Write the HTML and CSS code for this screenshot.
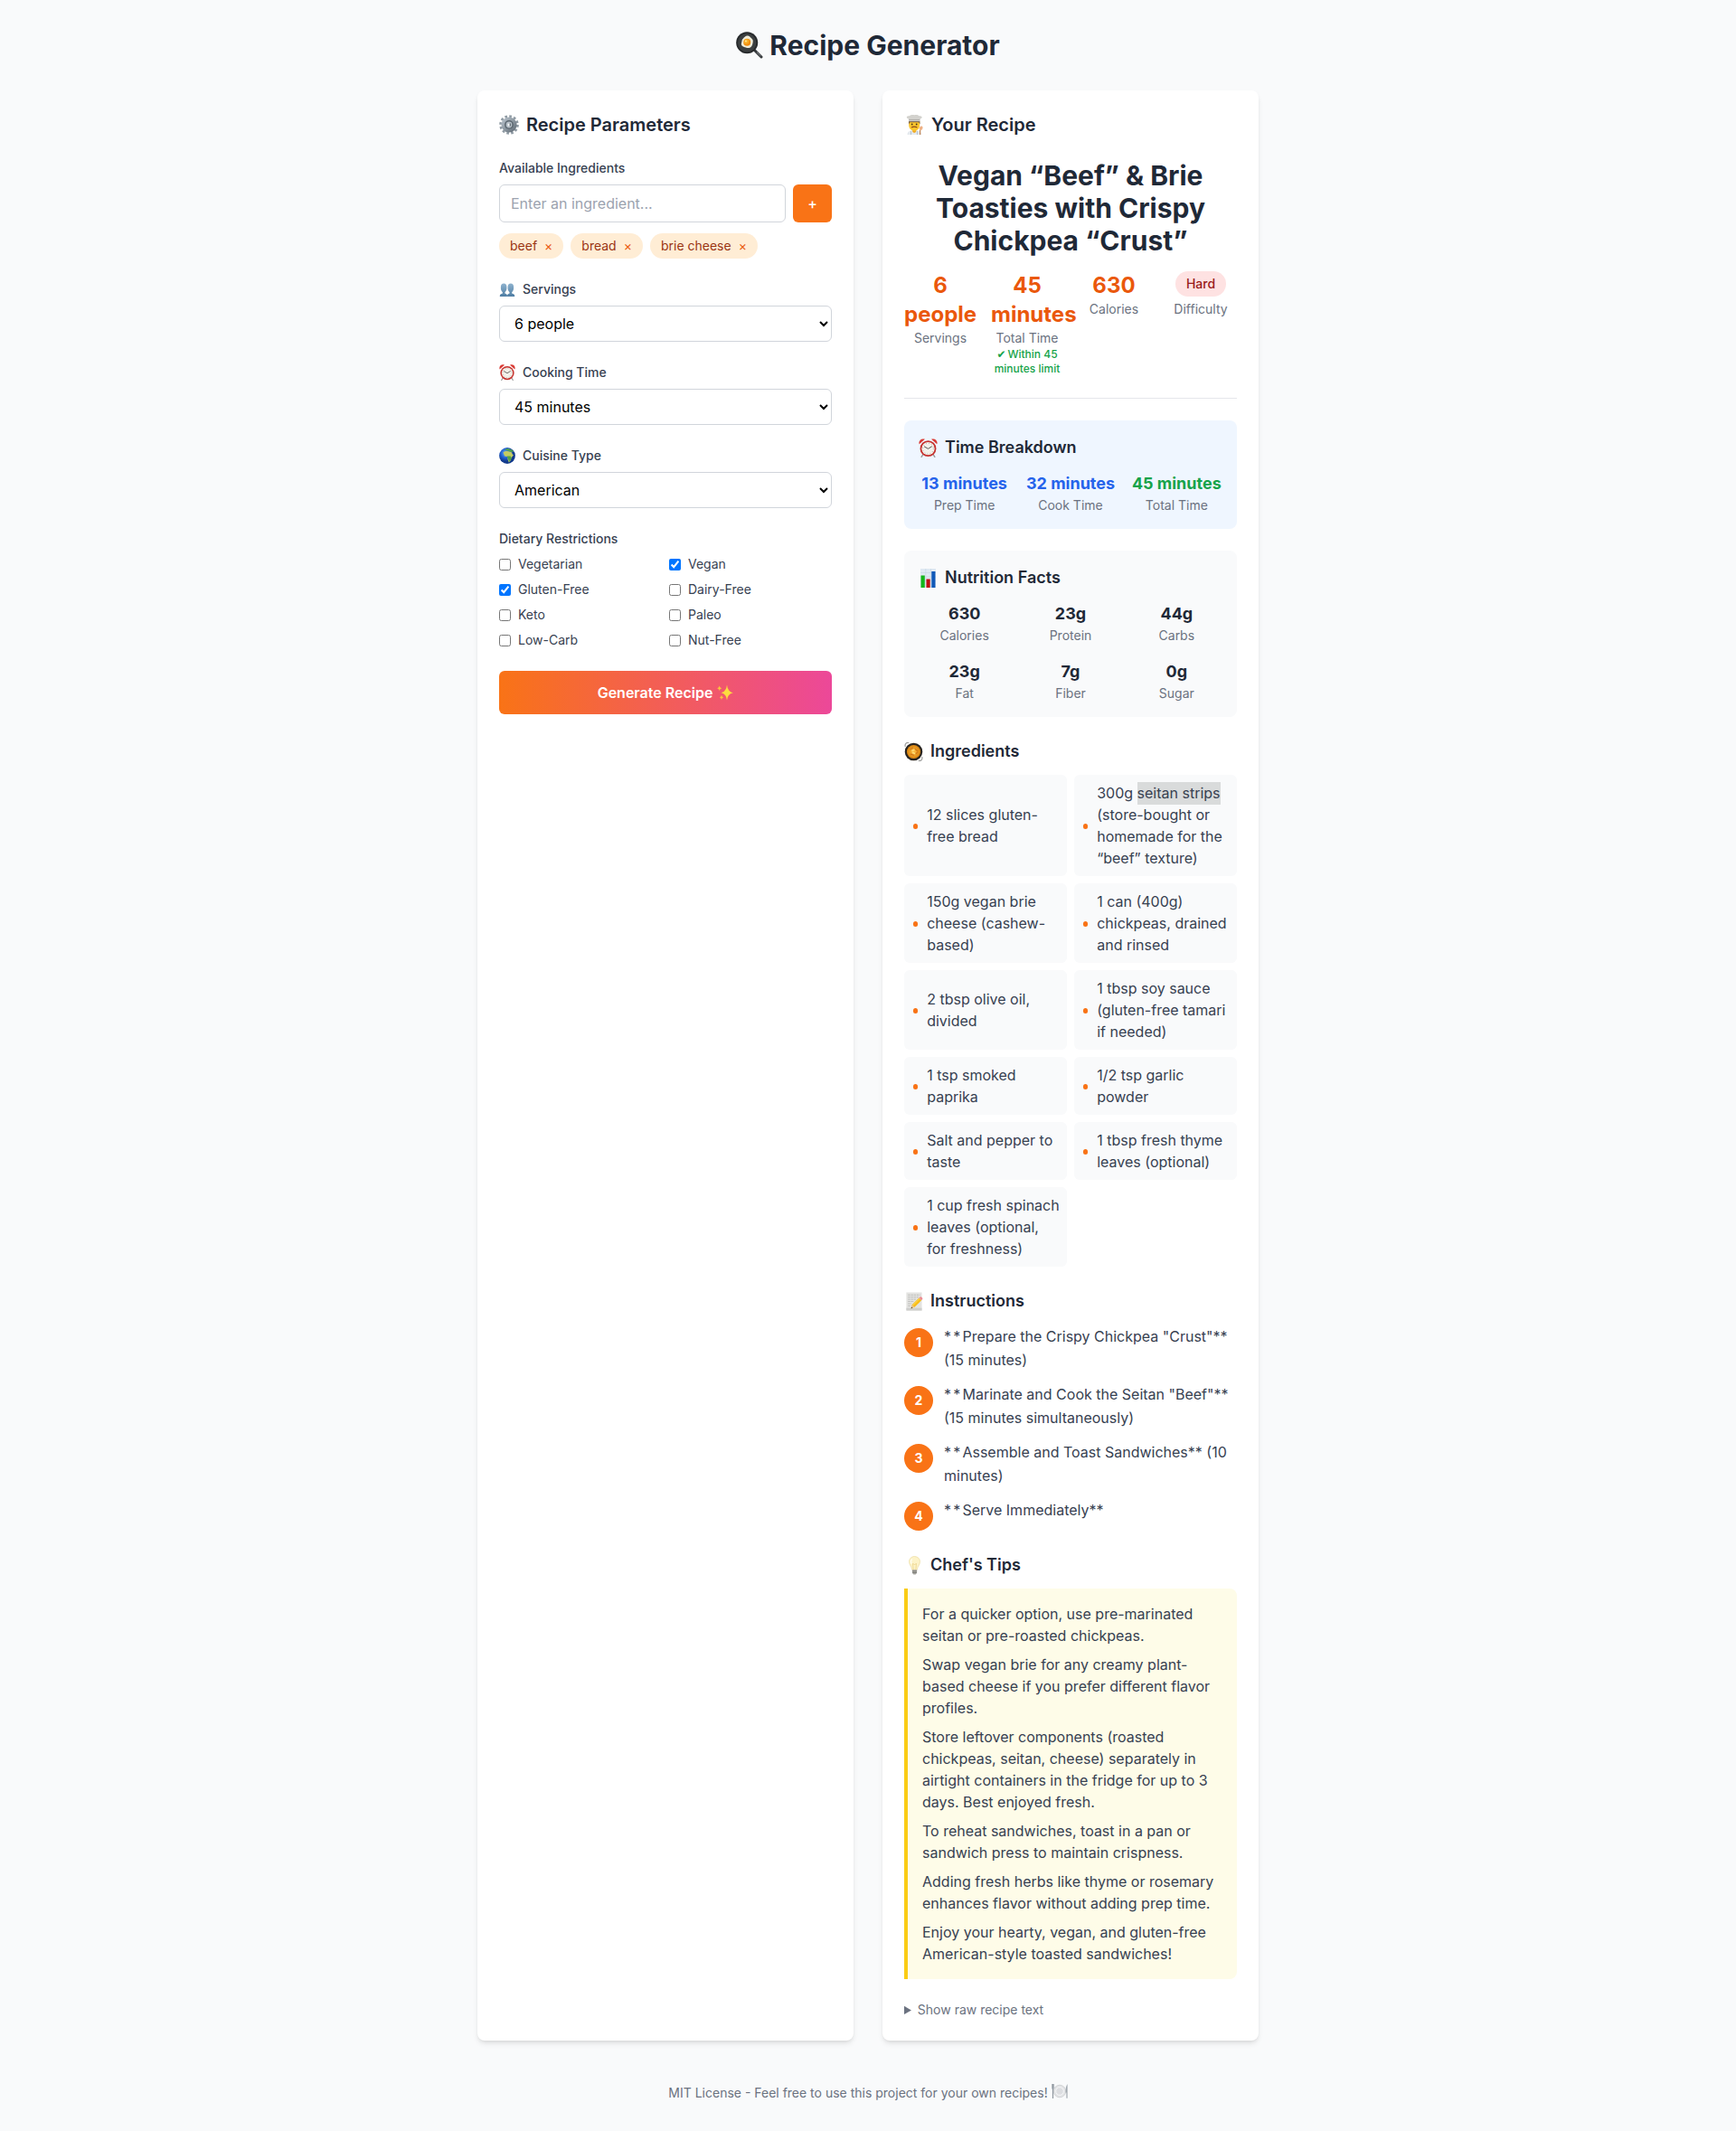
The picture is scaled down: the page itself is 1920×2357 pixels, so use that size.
FILE: index.html
```html
<!DOCTYPE html>
<html lang="en">
<head>
<meta charset="utf-8">
<title>Recipe Generator</title>
<link rel="stylesheet" href="styles.css">
</head>
<body>
<svg class="sprite" aria-hidden="true">
  <defs>
    <radialGradient id="globe-sea" cx=".4" cy=".35"><stop offset="0" stop-color="#6fb4ff"/><stop offset=".6" stop-color="#1f5fd0"/><stop offset="1" stop-color="#123a8c"/></radialGradient>
    <linearGradient id="bust-fill" x1="0" y1="0" x2="0" y2="1"><stop offset="0" stop-color="#8fb3cf"/><stop offset="1" stop-color="#4e7da3"/></linearGradient>
    <linearGradient id="gear-fill" x1="0" y1="0" x2="1" y2="1"><stop offset="0" stop-color="#b4bec7"/><stop offset="1" stop-color="#66717b"/></linearGradient>
    <radialGradient id="stew-fill"><stop offset="0" stop-color="#ffc247"/><stop offset="1" stop-color="#d9820d"/></radialGradient>
    <radialGradient id="yolk-fill" cx=".4" cy=".35"><stop offset="0" stop-color="#ffc93c"/><stop offset="1" stop-color="#f08b0c"/></radialGradient>
  </defs>
  <symbol id="pan" viewBox="0 0 30 30">
    <path d="M20.5 20.5 28 28" stroke="#33373a" stroke-width="3" stroke-linecap="round"/>
    <path d="M23 22.6 27.5 27" stroke="#8c9093" stroke-width="1"/>
    <circle cx="12.2" cy="12.3" r="12" fill="#26292b"/>
    <circle cx="12.2" cy="12.3" r="10.3" fill="#3c3f40"/>
    <path d="M12 4.600c2.600-.6 3.500 1.400 5.300 2.900s1.700 3 1.200 5.200-1.200 4.800-3.800 5.200-4.200-.5-6.300-1.200-3.100-2.300-2.300-4.500 0-3.100 1.700-4.500 2.300-2.800 4.200-3.100z" fill="#efecd9"/>
    <circle cx="12.200" cy="11.800" r="4" fill="url(#yolk-fill)"/>
    <circle cx="10.900" cy="10.400" r=".9" fill="#ffe9a0"/>
  </symbol>
  <symbol id="gear" viewBox="0 0 22 22">
    <circle cx="11" cy="11" r="9.300" fill="none" stroke="#8f9aa3" stroke-width="3" stroke-dasharray="2.600 2.270"/>
    <circle cx="11" cy="11" r="6.600" fill="none" stroke="url(#gear-fill)" stroke-width="4"/>
    <circle cx="11" cy="11" r="5" fill="#59646d"/>
    <circle cx="11" cy="11" r="3.400" fill="#b5bec6"/>
    <circle cx="11" cy="11" r="1.500" fill="#f8fafb"/>
    <path d="M12.200 9.500v3" stroke="#39434b" stroke-width="1"/>
  </symbol>
  <symbol id="chef" viewBox="0 0 20 22">
    <path d="M1.500 22c0-3.500 2.500-5 7.500-5s8 1.500 8 5z" fill="#e4e9ee"/>
    <path d="M5.500 18v4M12.500 18v4" stroke="#a9b9c8" stroke-width=".8"/>
    <path d="M7.200 16h4v3l-2 1-2-1z" fill="#f0ab25"/>
    <path d="M3.200 7h12v4.500c0 3.800-2.800 6.200-6 6.200s-6-2.400-6-6.200z" fill="#fcc62d"/>
    <path d="M3.100 6.500h12.200l.2 4-1.300-2.300H4.300l-1.200 2.300z" fill="#6c5138"/>
    <circle cx="6.700" cy="10.500" r=".9" fill="#49351d"/><circle cx="11.700" cy="10.500" r=".9" fill="#49351d"/>
    <path d="M6 14.100q3.200-1.800 6.400 0" stroke="#8c4a18" stroke-width="1.200" fill="none"/>
    <path d="M3.200 7.200 2.700 4.300C-.2 3.500.4 1 3.500 1.300 5 .1 7.500-.2 9.300.2c2-.4 4.200-.2 5.300 1.100 3.500-.1 4.200 2.100 1.300 3.100l-.6 2.800z" fill="#d3d2ce"/>
    <path d="M3.200 5.600h12" stroke="#a6a5a1" stroke-width=".8"/>
    <path d="M15.600 22v-5.500" stroke="#c58d63" stroke-width="1.400"/>
    <ellipse cx="16.700" cy="14.700" rx="1.800" ry="2.300" transform="rotate(20 16.700 14.700)" fill="#eeb185"/>
  </symbol>
  <symbol id="people" viewBox="0 0 18 16">
    <path d="M.2 16c0-2.600 1.200-3 3.300-3.700v-1.400C1.700 9.300 1.400 7.500 1.400 5c0-3 1.300-4.500 3.500-4.500S8.400 2 8.400 5c0 2.500-.3 4.300-2.100 5.900v1.400C8.400 13 9 13.400 9 16z" fill="url(#bust-fill)"/>
    <path d="M9 16c0-2.600.6-3 2.700-3.700v-1.400C9.900 9.300 9.600 7.500 9.600 5c0-3 1.300-4.500 3.500-4.500S16.600 2 16.600 5c0 2.500-.3 4.300-2.100 5.900v1.400c2.100.7 3.300 1.100 3.300 3.700z" fill="url(#bust-fill)"/>
  </symbol>
  <symbol id="clock" viewBox="0 0 20 20">
    <path d="M4.500 17 3 19.500M15.500 17l1.500 2.500" stroke="#999" stroke-width="1.300" stroke-linecap="round"/>
    <path d="M.7 6C-.6 2.500 3-.8 6.600.8z" fill="#d93832"/><path d="M19.300 6C20.600 2.500 17-.8 13.400.8z" fill="#d93832"/>
    <circle cx="10" cy="10.600" r="8.500" fill="#c5322e"/>
    <circle cx="10" cy="10.600" r="6.800" fill="#f4f1ea"/>
    <circle cx="10" cy="10.600" r="5.600" fill="none" stroke="#8e8a83" stroke-width=".8" stroke-dasharray=".7 2.230"/>
    <path d="m5.800 8.400 4.200 2.400 4-2.500" stroke="#4c4b49" stroke-width=".9" fill="none"/>
  </symbol>
  <symbol id="globe" viewBox="0 0 18 18">
    <circle cx="9" cy="9" r="8.900" fill="url(#globe-sea)"/>
    <path d="M4.500 5.500C5.500 4 8 3.500 10 4.200l3.500.6 1.500 3 1 .4-2.300 3-.9 3-2 2.300-1.300-3.600.1-2.700-3.400-.6z" fill="#c4cc62"/>
    <path d="M6 2.600 9.500.9l5 1.900 1.700 2.300-3.700-.7-3-.8z" fill="#4fa24a"/>
    <path d="M8.600 9.500h4l1.100 1.700-1 2.500-1.500 1.800z" fill="#4fa24a"/>
  </symbol>
  <symbol id="sparkles" viewBox="0 0 18 18">
    <path d="M11 .5Q11.600 8 17.800 9.200 11.600 10.400 11 17.500 10.400 10.400 4.600 9.200 10.400 8 11 .5z" fill="#fcdc3f"/>
    <path d="M2.700 1.500q.3 2.300 2.500 2.800Q3 4.800 2.700 7.200 2.400 4.800.2 4.300q2.200-.5 2.500-2.800zM5 11.800q.3 2 2.200 2.500Q5.300 14.800 5 17q-.3-2.200-2.200-2.700Q4.700 13.800 5 11.800z" fill="#fbc43c"/>
  </symbol>
  <symbol id="chart" viewBox="0 0 18 21">
    <path d="M.5 0h17v21H.5z" fill="#dfe9f2"/>
    <path d="M.5 4.500h17M.5 9h17M.5 13.500h17M6.300 0v21M12 0v21" stroke="#c3d3e1" stroke-width=".6"/>
    <path d="M1 7.500h4.300V21H1z" fill="#13b51b"/><path d="M7 11.500h4.200V21H7z" fill="#c10d12"/><path d="M12.800 3H17v18h-4.200z" fill="#1059b8"/>
  </symbol>
  <symbol id="stew" viewBox="0 0 20 20">
    <path d="M5 .8C2.500-.3.200 2 1.300 4.800M15 19.200c2.500 1.100 4.800-1.200 3.700-4" stroke="#9a9a98" stroke-width="1.100" fill="none"/>
    <circle cx="10" cy="10" r="9.300" fill="#292521"/>
    <circle cx="10" cy="10" r="7.200" fill="url(#stew-fill)"/>
    <path d="M6.500 7.500 9 5.800M11.500 7l2.500 2M7 12.500l3 1M12.500 12l1.500-1.500" stroke="#cf7418" stroke-width="1.100" stroke-linecap="round"/>
    <path d="m8.500 9 2-1M9 11l2 .8" stroke="#ffe07c" stroke-width="1.400" stroke-linecap="round"/>
  </symbol>
  <symbol id="memo" viewBox="0 0 20 22">
    <path d="M1.500.5h18v21h-18z" fill="#e3e3e1"/><path d="M1.500 18.500h18v3h-18z" fill="#cfcfcd"/>
    <path d="M3.500 3.500h14M3.500 6h12M3.500 8.500h9M3.500 11h7M3.500 13.500h4M3.500 16h3" stroke="#b1b1af" stroke-width=".8" stroke-dasharray="2.500 .8"/>
    <path d="m7 19 1.200-4.300 8-7.800 2.800 2.900-8 7.800z" fill="#f9bd18"/>
    <path d="m8.700 15.800 8.200-8" stroke="#ffdf62" stroke-width="1"/>
    <path d="m7 19 1.200-4.300 2.800 2.900z" fill="#e9c38e"/><path d="m7 19 .5-1.800 1.200 1.300z" fill="#3c3936"/>
    <path d="m16.200 6.900 1.200-1.100c1.200-1 3.700 1.400 2.700 2.700L19 9.800z" fill="#ed8c93"/>
  </symbol>
  <symbol id="bulb" viewBox="0 0 20 21">
    <path d="M11 .5c3.700 0 6 2.700 6 5.800 0 3.600-2.800 5.200-3.200 9H8.200C7.800 11.500 5 9.900 5 6.300 5 3.200 7.300.5 11 .5z" fill="#fdf3c8" stroke="#ead99b" stroke-width=".6"/>
    <path d="M9.700 15 9 8.500l2 1 2-1-.7 6.500" stroke="#e6c976" stroke-width=".6" fill="none"/>
    <path d="M8.400 3.500C6.800 4.700 6.500 7 7.700 8.500" stroke="#fffdf0" stroke-width="1.500" fill="none"/>
    <path d="M8.400 15.300h5.200v3.400L12.200 20.500H9.800l-1.400-1.800z" fill="#aaa9a3"/><path d="M8.400 16.800h5.200M8.700 18.500h4.700" stroke="#6f6e69" stroke-width=".7"/>
  </symbol>
  <symbol id="plate" viewBox="0 0 18 16">
    <circle cx="9" cy="8" r="6.800" fill="#e2e3e5" stroke="#c7c9cc" stroke-width=".7"/>
    <circle cx="9" cy="8" r="4.300" fill="#dcdde0" stroke="#f8f8f9" stroke-width=".9"/>
    <path d="M1.500 0v16" stroke="#90979f" stroke-width="1.200"/><path d="M.4 0v4.500c0 1.500 2.200 1.500 2.200 0V0" stroke="#929ba3" stroke-width=".7" fill="none"/>
    <path d="M17.600 0v15.700h-1.200V9.500h-.8C15.600 5 16 2 17.600 0z" fill="#a1a8af"/>
  </symbol>
</svg>

<div class="page">
  <header><h1><svg class="icon-title"><use href="#pan"/></svg>Recipe Generator</h1></header>
  <main class="columns">
    <section class="card">
      <h2><svg class="icon-lg"><use href="#gear"/></svg>Recipe Parameters</h2>
      <form class="form">
        <div class="field">
          <label class="label" for="ingredient">Available Ingredients</label>
          <div class="add-row">
            <input class="text-input" id="ingredient" type="text" placeholder="Enter an ingredient...">
            <button class="add-button" type="button">+</button>
          </div>
          <div class="tags">
            <span class="tag">beef<button type="button">×</button></span>
            <span class="tag">bread<button type="button">×</button></span>
            <span class="tag">brie cheese<button type="button">×</button></span>
          </div>
        </div>
        <div class="field">
          <label class="label" for="servings"><svg class="icon-sm people"><use href="#people"/></svg>Servings</label>
          <select id="servings"><option>6 people</option></select>
        </div>
        <div class="field">
          <label class="label" for="time"><svg class="icon-sm"><use href="#clock"/></svg>Cooking Time</label>
          <select id="time"><option>45 minutes</option></select>
        </div>
        <div class="field">
          <label class="label" for="cuisine"><svg class="icon-sm"><use href="#globe"/></svg>Cuisine Type</label>
          <select id="cuisine"><option>American</option></select>
        </div>
        <div class="field">
          <span class="label">Dietary Restrictions</span>
          <div class="checks">
            <label><input type="checkbox">Vegetarian</label>
            <label><input type="checkbox" checked>Vegan</label>
            <label><input type="checkbox" checked>Gluten-Free</label>
            <label><input type="checkbox">Dairy-Free</label>
            <label><input type="checkbox">Keto</label>
            <label><input type="checkbox">Paleo</label>
            <label><input type="checkbox">Low-Carb</label>
            <label><input type="checkbox">Nut-Free</label>
          </div>
        </div>
        <button class="generate" type="button">Generate Recipe<svg class="icon-spark"><use href="#sparkles"/></svg></button>
      </form>
    </section>

    <section class="card">
      <h2><svg class="icon-lg chef"><use href="#chef"/></svg>Your Recipe</h2>
      <div class="recipe">
        <div class="summary">
          <h1>Vegan “Beef” &amp; Brie Toasties with Crispy Chickpea “Crust”</h1>
          <div class="stats">
            <div><div class="stat">6 people</div><div class="caption">Servings</div></div>
            <div><div class="stat">45 minutes</div><div class="caption">Total Time</div><div class="within"><span class="tick">✔</span>Within 45 minutes limit</div></div>
            <div><div class="stat">630</div><div class="caption">Calories</div></div>
            <div><div class="badge">Hard</div><div class="caption">Difficulty</div></div>
          </div>
        </div>

        <div class="panel blue">
          <h3><svg class="icon-md"><use href="#clock"/></svg>Time Breakdown</h3>
          <div class="facts">
            <div><div class="value prep">13 minutes</div><div class="caption">Prep Time</div></div>
            <div><div class="value prep">32 minutes</div><div class="caption">Cook Time</div></div>
            <div><div class="value total">45 minutes</div><div class="caption">Total Time</div></div>
          </div>
        </div>

        <div class="panel">
          <h3><svg class="icon-md"><use href="#chart"/></svg>Nutrition Facts</h3>
          <div class="facts">
            <div><div class="value">630</div><div class="caption">Calories</div></div>
            <div><div class="value">23g</div><div class="caption">Protein</div></div>
            <div><div class="value">44g</div><div class="caption">Carbs</div></div>
            <div><div class="value">23g</div><div class="caption">Fat</div></div>
            <div><div class="value">7g</div><div class="caption">Fiber</div></div>
            <div><div class="value">0g</div><div class="caption">Sugar</div></div>
          </div>
        </div>

        <div>
          <h3><svg class="icon-md"><use href="#stew"/></svg>Ingredients</h3>
          <ul class="ingredients">
            <li><span>12 slices gluten-free bread</span></li>
            <li><span>300g <span class="selected">seitan strips</span> (store-bought or homemade for the “beef” texture)</span></li>
            <li><span>150g vegan brie cheese (cashew-based)</span></li>
            <li><span>1 can (400g) chickpeas, drained and rinsed</span></li>
            <li><span>2 tbsp olive oil, divided</span></li>
            <li><span>1 tbsp soy sauce (gluten-free tamari if needed)</span></li>
            <li><span>1 tsp smoked paprika</span></li>
            <li><span>1/2 tsp garlic powder</span></li>
            <li><span>Salt and pepper to taste</span></li>
            <li><span>1 tbsp fresh thyme leaves (optional)</span></li>
            <li><span>1 cup fresh spinach leaves (optional, for freshness)</span></li>
          </ul>
        </div>

        <div>
          <h3><svg class="icon-md"><use href="#memo"/></svg>Instructions</h3>
          <ol class="steps">
            <li><span class="num">1</span><p><span class="stars">**</span>Prepare the Crispy Chickpea "Crust"** (15 minutes)</p></li>
            <li><span class="num">2</span><p><span class="stars">**</span>Marinate and Cook the Seitan "Beef"** (15 minutes simultaneously)</p></li>
            <li><span class="num">3</span><p><span class="stars">**</span>Assemble and Toast Sandwiches** (10 minutes)</p></li>
            <li><span class="num">4</span><p><span class="stars">**</span>Serve Immediately**</p></li>
          </ol>
        </div>

        <div>
          <h3><svg class="icon-md"><use href="#bulb"/></svg>Chef's Tips</h3>
          <div class="tips">
            <p>For a quicker option, use pre-marinated seitan or pre-roasted chickpeas.</p>
            <p>Swap vegan brie for any creamy plant-based cheese if you prefer different flavor profiles.</p>
            <p>Store leftover components (roasted chickpeas, seitan, cheese) separately in airtight containers in the fridge for up to 3 days. Best enjoyed fresh.</p>
            <p>To reheat sandwiches, toast in a pan or sandwich press to maintain crispness.</p>
            <p>Adding fresh herbs like thyme or rosemary enhances flavor without adding prep time.</p>
            <p>Enjoy your hearty, vegan, and gluten-free American-style toasted sandwiches!</p>
          </div>
        </div>

        <details><summary>Show raw recipe text</summary></details>
      </div>
    </section>
  </main>
  <footer>MIT License - Feel free to use this project for your own recipes!<svg class="icon-plate"><use href="#plate"/></svg></footer>
</div>
</body>
</html>
```
FILE: styles.css
```css
*, *::before, *::after { box-sizing: border-box; margin: 0; padding: 0; }
body { background: #f9fafb; color: #374151; font: 16px/24px Inter, sans-serif; }
svg { display: block; flex: none; }
.sprite { position: absolute; width: 0; height: 0; }
button, input, select { font: inherit; }
button { border: 0; }
ul, ol { list-style: none; }

.page { width: 864px; margin: 0 auto; padding: 32px 0; }
h1 { color: #1f2937; font-size: 30px; line-height: 36px; font-weight: 700; text-align: center; }
header { margin-bottom: 32px; }
header h1 { display: flex; justify-content: center; }
h2 { display: flex; align-items: center; color: #1f2937; font-size: 20px; line-height: 28px; font-weight: 600; margin-bottom: 24px; }
h3 { display: flex; align-items: center; gap: 8px; color: #1f2937; font-size: 18px; line-height: 28px; font-weight: 600; margin-bottom: 12px; }

.icon-title { width: 30px; height: 30px; margin: 3px 7px 0 0; }
.icon-lg { width: 22px; height: 22px; margin-right: 8px; }
.chef { width: 20px; margin: 0 8px 0 2px; }
.icon-md { width: 21px; height: 21px; }
.icon-sm { width: 18px; height: 18px; margin-right: 8px; }
.people { height: 15px; }
.icon-spark { width: 18px; height: 18px; margin-left: 5px; }
.icon-plate { width: 18px; height: 16px; margin-left: 4px; }

.columns { display: grid; grid-template-columns: 1fr 1fr; gap: 32px; }
.card { background: #fff; border-radius: 8px; padding: 24px; min-width: 0; box-shadow: 0 4px 6px -1px rgb(0 0 0 / .1), 0 2px 4px -2px rgb(0 0 0 / .1); }

.form, .recipe { display: flex; flex-direction: column; gap: 24px; }
.label { display: flex; align-items: center; font-size: 14px; line-height: 20px; font-weight: 500; margin-bottom: 8px; }
.add-row { display: flex; gap: 8px; }
.text-input { flex: 1; min-width: 0; height: 42px; padding: 8px 12px; border: 1px solid #d1d5db; border-radius: 6px; background: #fff; }
.text-input::placeholder { color: #9ca3af; }
.add-button { padding: 8px 16px; border-radius: 6px; background: #f97316; color: #fff; font-weight: 500; }
.tags { display: flex; gap: 8px; margin-top: 12px; }
.tag { display: flex; gap: 8px; padding: 4px 12px; border-radius: 14px; background: #ffedd5; color: #9a3412; font-size: 14px; line-height: 20px; }
.tag button { background: none; color: #ea580c; }
select { display: block; width: 100%; height: 40px; padding: 8px 12px; border: 1px solid #d1d5db; border-radius: 6px; background: #fff; color: #000; }
.checks { display: grid; grid-template-columns: 1fr 1fr; gap: 8px; }
.checks label { display: flex; align-items: center; gap: 8px; font-size: 14px; line-height: 20px; }
.checks input { width: 13px; height: 13px; }
.generate { display: flex; justify-content: center; align-items: center; height: 48px; border-radius: 6px; background: linear-gradient(to right, #f97316, #ec4899); color: #fff; font-weight: 600; }

.summary { padding-bottom: 24px; border-bottom: 1px solid #e5e7eb; }
.stats { display: grid; grid-template-columns: repeat(4, 80px); gap: 16px; margin-top: 16px; text-align: center; }
.stat { color: #ea580c; font-size: 24px; line-height: 32px; font-weight: 700; }
.caption { color: #6b7280; font-size: 14px; line-height: 20px; }
.within { color: #16a34a; font-size: 12px; line-height: 16px; font-weight: 500; }
.tick { display: inline-block; height: 16px; margin-right: 2px; vertical-align: top; font-family: "DejaVu Sans", sans-serif; }
.badge { width: fit-content; margin: 0 auto 4px; padding: 4px 12px; border-radius: 14px; background: #fee2e2; color: #991b1b; font-size: 14px; line-height: 20px; font-weight: 500; }

.panel { padding: 16px; border-radius: 8px; background: #f9fafb; }
.blue { background: #eff6ff; }
.facts { display: grid; grid-template-columns: repeat(3, 1fr); gap: 16px; text-align: center; }
.value { color: #1f2937; font-size: 18px; line-height: 28px; font-weight: 700; white-space: nowrap; }
.prep { color: #2563eb; }
.total { color: #16a34a; }

.ingredients { display: grid; grid-template-columns: 1fr 1fr; gap: 8px; }
.ingredients li { display: flex; align-items: center; padding: 8px; border-radius: 6px; background: #f9fafb; }
.ingredients li::before { content: ""; flex: none; width: 5.5px; height: 5.5px; margin: 2px 10px 0 1.700px; border-radius: 50%; background: #f97316; }
.selected { background: #d9dbdb; padding: 2px 0 3px; }
.steps { display: flex; flex-direction: column; gap: 12px; }
.steps li { display: flex; align-items: flex-start; gap: 12px; line-height: 26px; }
.stars { letter-spacing: 2.2px; }
.num { flex: none; width: 32px; height: 32px; margin-top: 4px; border-radius: 50%; background: #f97316; color: #fff; font-size: 14px; line-height: 32px; font-weight: 700; text-align: center; }
.tips { display: flex; flex-direction: column; gap: 8px; padding: 16px; border-left: 4px solid #facc15; border-radius: 0 8px 8px 0; background: #fefce8; }
details { color: #6b7280; font-size: 14px; line-height: 20px; }
footer { display: flex; justify-content: center; margin-top: 48px; color: #6b7280; font-size: 14px; line-height: 20px; }
```
